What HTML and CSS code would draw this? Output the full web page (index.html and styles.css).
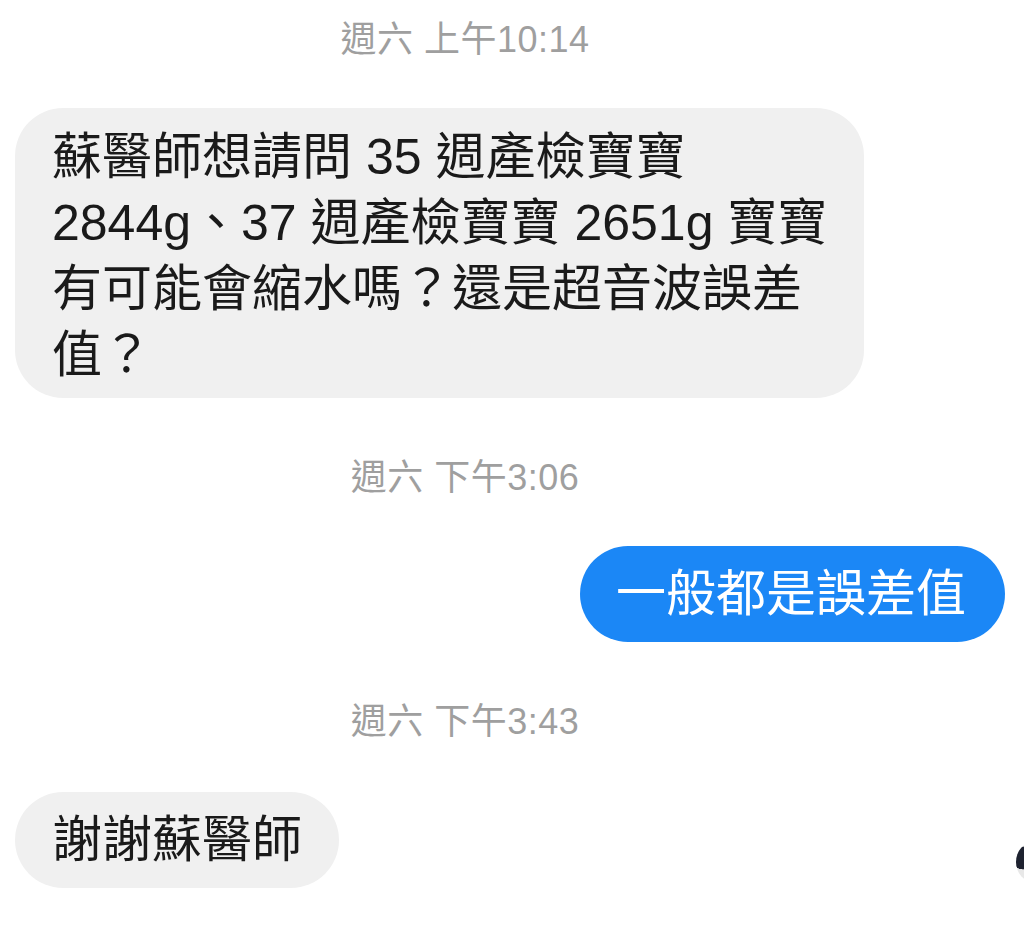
FILE: index.html
```html
<!DOCTYPE html>
<html lang="zh-Hant">
<head>
<meta charset="utf-8">
<title>Chat</title>
<link rel="stylesheet" href="styles.css">
</head>
<body>
<main class="chat">
  <div class="time first">週六 上午10:14</div>
  <div class="row in">
    <div class="bubble gray big">蘇醫師想請問 35 週產檢寶寶<br>2844g、37 週產檢寶寶 2651g 寶寶<br>有可能會縮水嗎？還是超音波誤差<br>值？</div>
  </div>
  <div class="time">週六 下午3:06</div>
  <div class="row out">
    <div class="bubble blue">一般都是誤差值</div>
  </div>
  <div class="time">週六 下午3:43</div>
  <div class="row in last">
    <div class="bubble gray">謝謝蘇醫師</div>
    <span class="avatar"></span>
  </div>
</main>
</body>
</html>
```

FILE: styles.css
```css
html, body {
  margin: 0;
  padding: 0;
  background: #ffffff;
}
body {
  width: 1024px;
  height: 937px;
  overflow: hidden;
  font-family: "Liberation Sans", "Noto Sans CJK TC", sans-serif;
}
.chat {
  display: flex;
  flex-direction: column;
  padding-top: 20px;
}
.time {
  height: 40px;
  line-height: 40px;
  font-size: 36px;
  letter-spacing: 0.5px;
  color: #9f9f9f;
  text-align: center;
  width: 930px;
  margin-top: 60px;
  margin-bottom: 48px;
}
.time.first {
  margin-top: 0;
}
.row {
  display: flex;
  position: relative;
}
.row.in {
  justify-content: flex-start;
  padding-left: 15px;
}
.row.out {
  justify-content: flex-end;
  padding-right: 19px;
}
.row.last {
  margin-top: 2px;
}
.bubble {
  font-size: 50px;
  line-height: 60px;
  padding: 18px 37px;
  border-radius: 48px;
  color: #1a1a1a;
  white-space: nowrap;
}
.bubble.big {
  line-height: 66px;
  padding: 16px 37px 10px;
  border-radius: 48px;
}
.gray {
  background: #f0f0f0;
}
.blue {
  background: #1b87f6;
  color: #ffffff;
  padding-left: 36px;
  padding-right: 39px;
}
.avatar {
  position: absolute;
  left: 1016px;
  top: 50px;
  width: 36px;
  height: 40px;
  border-radius: 50%;
  background: radial-gradient(circle at 20% 40%, #1e2230 0 30%, #e8e8e8 31% 55%, #8a8a90 56%);
}
```
